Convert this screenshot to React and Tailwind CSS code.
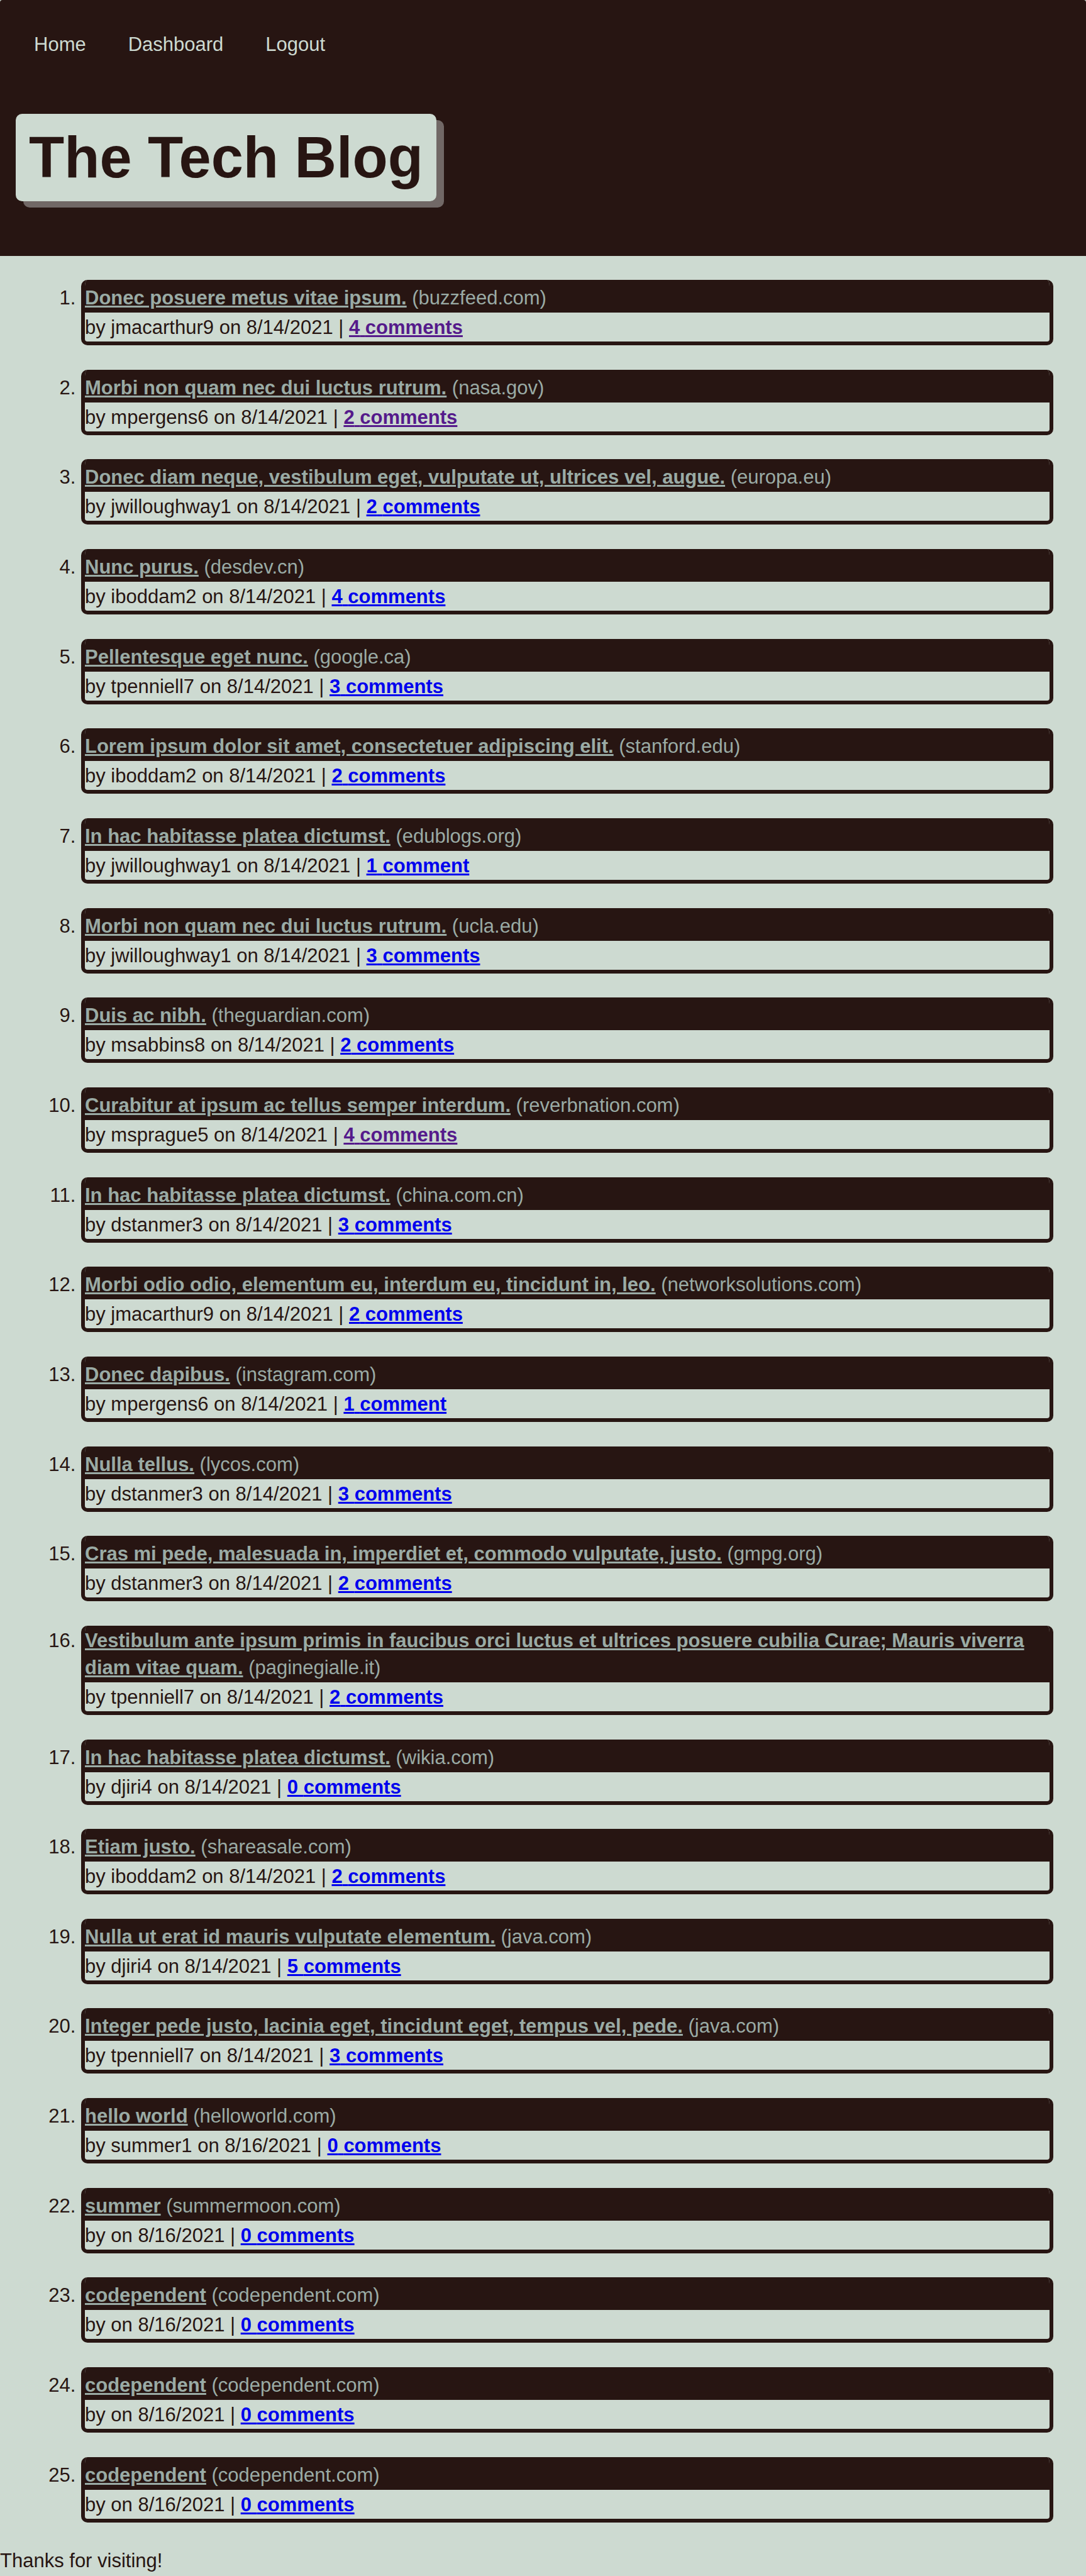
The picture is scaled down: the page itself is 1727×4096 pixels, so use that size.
const posts = [
  ["Donec posuere metus vitae ipsum.", "buzzfeed.com", "jmacarthur9", "8/14/2021", 4, true],
  ["Morbi non quam nec dui luctus rutrum.", "nasa.gov", "mpergens6", "8/14/2021", 2, true],
  ["Donec diam neque, vestibulum eget, vulputate ut, ultrices vel, augue.", "europa.eu", "jwilloughway1", "8/14/2021", 2],
  ["Nunc purus.", "desdev.cn", "iboddam2", "8/14/2021", 4],
  ["Pellentesque eget nunc.", "google.ca", "tpenniell7", "8/14/2021", 3],
  ["Lorem ipsum dolor sit amet, consectetuer adipiscing elit.", "stanford.edu", "iboddam2", "8/14/2021", 2],
  ["In hac habitasse platea dictumst.", "edublogs.org", "jwilloughway1", "8/14/2021", 1],
  ["Morbi non quam nec dui luctus rutrum.", "ucla.edu", "jwilloughway1", "8/14/2021", 3],
  ["Duis ac nibh.", "theguardian.com", "msabbins8", "8/14/2021", 2],
  ["Curabitur at ipsum ac tellus semper interdum.", "reverbnation.com", "msprague5", "8/14/2021", 4, true],
  ["In hac habitasse platea dictumst.", "china.com.cn", "dstanmer3", "8/14/2021", 3],
  ["Morbi odio odio, elementum eu, interdum eu, tincidunt in, leo.", "networksolutions.com", "jmacarthur9", "8/14/2021", 2],
  ["Donec dapibus.", "instagram.com", "mpergens6", "8/14/2021", 1],
  ["Nulla tellus.", "lycos.com", "dstanmer3", "8/14/2021", 3],
  ["Cras mi pede, malesuada in, imperdiet et, commodo vulputate, justo.", "gmpg.org", "dstanmer3", "8/14/2021", 2],
  ["Vestibulum ante ipsum primis in faucibus orci luctus et ultrices posuere cubilia Curae; Mauris viverra diam vitae quam.", "paginegialle.it", "tpenniell7", "8/14/2021", 2],
  ["In hac habitasse platea dictumst.", "wikia.com", "djiri4", "8/14/2021", 0],
  ["Etiam justo.", "shareasale.com", "iboddam2", "8/14/2021", 2],
  ["Nulla ut erat id mauris vulputate elementum.", "java.com", "djiri4", "8/14/2021", 5],
  ["Integer pede justo, lacinia eget, tincidunt eget, tempus vel, pede.", "java.com", "tpenniell7", "8/14/2021", 3],
  ["hello world", "helloworld.com", "summer1", "8/16/2021", 0],
  ["summer", "summermoon.com", "", "8/16/2021", 0],
  ["codependent", "codependent.com", "", "8/16/2021", 0],
  ["codependent", "codependent.com", "", "8/16/2021", 0],
  ["codependent", "codependent.com", "", "8/16/2021", 0],
];

function Post({ title, site, author, date, count, visited }) {
  return (
    <li>
      <article className="overflow-hidden rounded-[10px] border-x-6 border-b-6 border-[#271512]">
        <div className="flex min-h-[52px] flex-col justify-end bg-[#271512] py-[2px] text-[#9aaba5]">
          <p>
            <a href="#post" className="font-bold underline">{title}</a> ({site})
          </p>
        </div>
        <div className="pt-[2px] pb-px">
          by {author} on {date} |{" "}
          <a
            href="#comments"
            className={visited ? "font-bold text-[#551a8b] underline" : "font-bold text-[#0000ee] underline"}
          >
            {count} {count === 1 ? "comment" : "comments"}
          </a>
        </div>
      </article>
    </li>
  );
}

export default function App() {
  return (
    <div className="flex min-h-screen flex-col bg-[#cddad1] font-['Liberation_Sans',Arial,sans-serif] text-[31px] leading-[43px] text-[#271512]">
      <header className="rounded-t-[4px] bg-[#271512] pt-[49px] pb-[87px]">
        <nav className="flex gap-[67px] pl-[54px] text-[#cddad1]">
          <a href="#home">Home</a>
          <a href="#dashboard">Dashboard</a>
          <a href="#logout">Logout</a>
        </nav>
        <h1 className="mt-[89px] ml-[25px] w-fit rounded-[10px] bg-[#cddad1] px-[21px] text-[92px] leading-[139px] font-bold shadow-[12px_10px_0_#716866]">
          <a href="#home">The Tech Blog</a>
        </h1>
      </header>
      <main className="flex flex-1 flex-col">
        <ol className="flex flex-1 list-decimal flex-col justify-between pt-[38px] pr-[52px] pb-[39px] pl-[129px]">
          {posts.map(([title, site, author, date, count, visited], i) => (
            <Post key={i} title={title} site={site} author={author} date={date} count={count} visited={visited} />
          ))}
        </ol>
      </main>
      <footer className="pb-[3px]">Thanks for visiting!</footer>
    </div>
  );
}
